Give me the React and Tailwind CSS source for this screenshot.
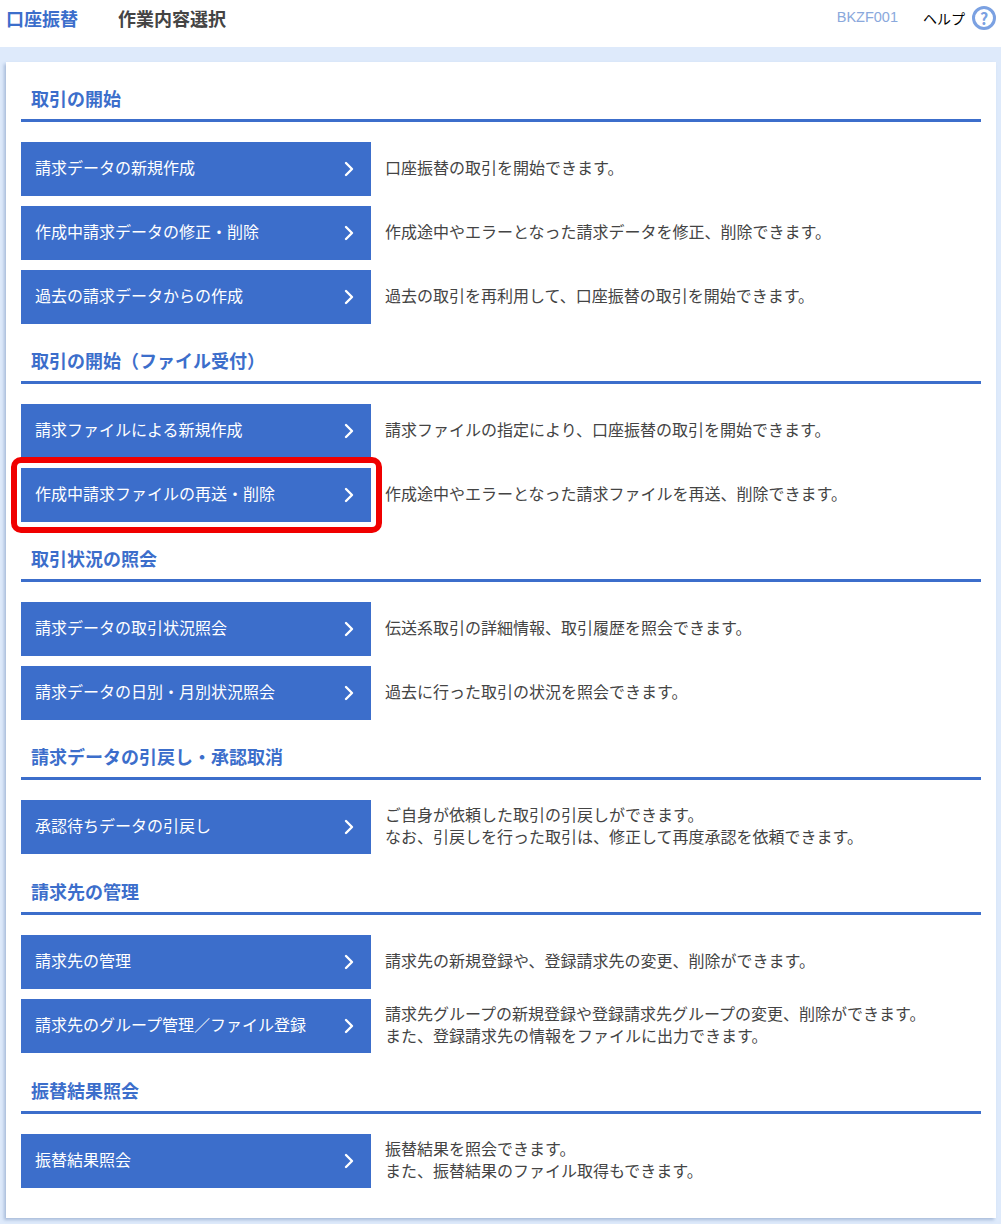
import { ChevronRight } from "lucide-react";

const sections = [
    {
        title: "取引の開始",
        items: [
            { label: "請求データの新規作成", desc: ["口座振替の取引を開始できます。"] },
            { label: "作成中請求データの修正・削除", desc: ["作成途中やエラーとなった請求データを修正、削除できます。"] },
            { label: "過去の請求データからの作成", desc: ["過去の取引を再利用して、口座振替の取引を開始できます。"] },
        ],
    },
    {
        title: "取引の開始（ファイル受付）",
        items: [
            { label: "請求ファイルによる新規作成", desc: ["請求ファイルの指定により、口座振替の取引を開始できます。"] },
            { label: "作成中請求ファイルの再送・削除", desc: ["作成途中やエラーとなった請求ファイルを再送、削除できます。"], marked: true },
        ],
    },
    {
        title: "取引状況の照会",
        items: [
            { label: "請求データの取引状況照会", desc: ["伝送系取引の詳細情報、取引履歴を照会できます。"] },
            { label: "請求データの日別・月別状況照会", desc: ["過去に行った取引の状況を照会できます。"] },
        ],
    },
    {
        title: "請求データの引戻し・承認取消",
        items: [
            { label: "承認待ちデータの引戻し", desc: ["ご自身が依頼した取引の引戻しができます。", "なお、引戻しを行った取引は、修正して再度承認を依頼できます。"] },
        ],
    },
    {
        title: "請求先の管理",
        items: [
            { label: "請求先の管理", desc: ["請求先の新規登録や、登録請求先の変更、削除ができます。"] },
            { label: "請求先のグループ管理／ファイル登録", desc: ["請求先グループの新規登録や登録請求先グループの変更、削除ができます。", "また、登録請求先の情報をファイルに出力できます。"] },
        ],
    },
    {
        title: "振替結果照会",
        items: [
            { label: "振替結果照会", desc: ["振替結果を照会できます。", "また、振替結果のファイル取得もできます。"] },
        ],
    },
];

function MenuRow({ item }) {
    return (
        <div className={`flex items-center ${item.desc.length > 1 ? "mb-px" : ""}`}>
            <div className="relative w-[350px] shrink-0">
                <button className="flex h-[54px] w-full items-center justify-between bg-[#3c6ecb] pl-[14px] pr-[10px] text-left text-[16px] text-white">
                    <span className="pb-[4px]">{item.label}</span>
                    <ChevronRight size={24} strokeWidth={2.4} className="text-white" />
                </button>
                {item.marked && (
                    <div className="absolute -bottom-[11px] -left-[10px] -right-[11px] -top-[11px] rounded-[10px] border-[6px] border-[#f00000]" />
                )}
            </div>
            <div className="pb-[4px] pl-[14px] text-[16px] leading-[22px] text-[#444444]">
                {item.desc.map((line) => (
                    <div key={line}>{line}</div>
                ))}
            </div>
        </div>
    );
}

export default function App() {
    return (
        <div className="h-[1224px] bg-[#deeafb] font-['Noto_Sans_CJK_JP','Noto_Sans',sans-serif]">
            <header className="flex h-[47px] items-center bg-white pb-[11px] pl-[6px] pr-[5px]">
                <h1 className="w-[112px] text-[18px] font-bold text-[#3c6ecb]">口座振替</h1>
                <h2 className="text-[18px] font-bold text-[#444444]">作業内容選択</h2>
                <span className="ml-auto mr-[25px] font-['Liberation_Sans',sans-serif] text-[14.5px] text-[#8aa8dc]">BKZF001</span>
                <span className="mr-[7px] text-[14px] text-black">ヘルプ</span>
                <span className="flex h-[24px] w-[24px] items-center justify-center rounded-full border-[3px] border-[#7ba1e2] text-[16px] font-bold leading-none text-[#7ba1e2]">?</span>
            </header>
            <main className="ml-[6px] mr-[5px] mt-[15px] h-[1156px] bg-white px-[15px] shadow-[-2px_2px_3px_rgba(90,120,170,0.4)]">
                {sections.map((section) => (
                    <section key={section.title}>
                        <h3 className="flex h-[60px] items-end border-b-[3px] border-[#3c6ecb] pb-[8px] pl-[10px] text-[18px] font-bold leading-[26px] text-[#3c6ecb]">
                            {section.title}
                        </h3>
                        <div className="flex flex-col gap-[10px] pt-[20px]">
                            {section.items.map((item) => (
                                <MenuRow key={item.label} item={item} />
                            ))}
                        </div>
                    </section>
                ))}
            </main>
        </div>
    );
}
